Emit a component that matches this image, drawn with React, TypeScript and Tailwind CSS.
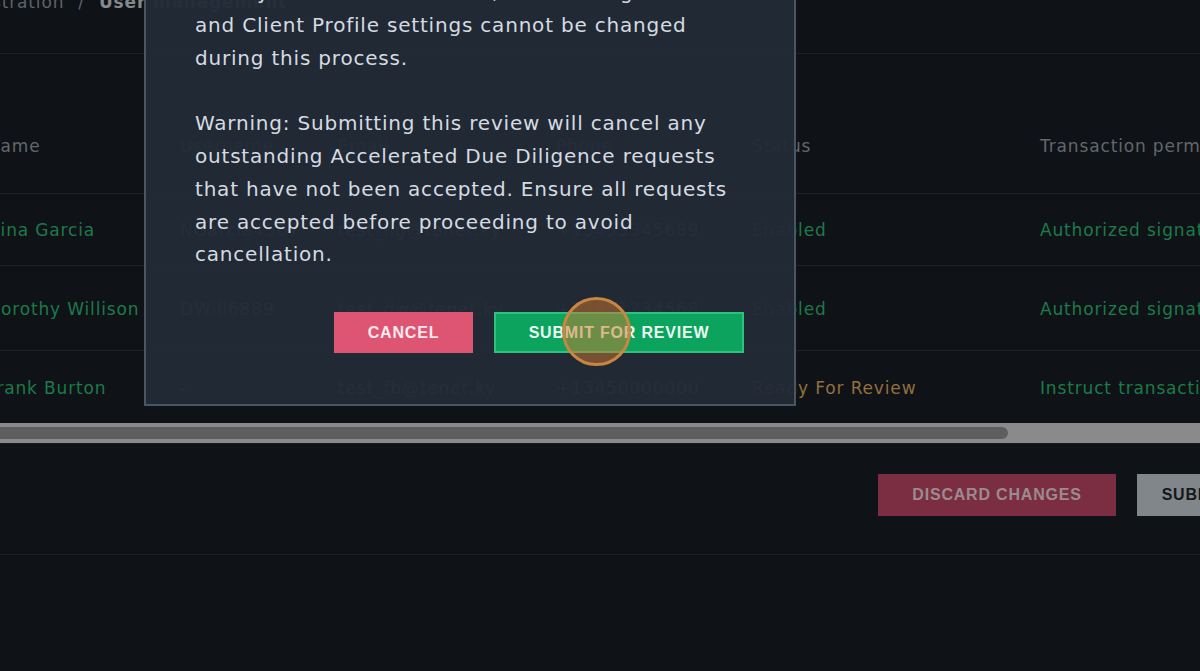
import React from "react";

type Row = {
  name: string;
  username: string;
  email: string;
  phone: string;
  status: string;
  pending?: boolean;
  permission: string;
  height: string;
};

const rows: Row[] = [
  {
    name: "Nina Garcia",
    username: "NGarcia4567",
    email: "test_ng@tenet.ky",
    phone: "+13453345689",
    status: "Enabled",
    permission: "Authorized signatory",
    height: "h-[72px]",
  },
  {
    name: "Dorothy Willison",
    username: "DWill6889",
    email: "test_dw@tenet.ky",
    phone: "+13451234568",
    status: "Enabled",
    permission: "Authorized signatory",
    height: "h-[85px]",
  },
  {
    name: "Frank Burton",
    username: "-",
    email: "test_fb@tenet.ky",
    phone: "+13450000000",
    status: "Ready For Review",
    pending: true,
    permission: "Instruct transactions",
    height: "h-[72px]",
  },
];

const cols = "grid grid-cols-[193px_158px_218px_196px_288px_300px]";

export default function App() {
  return (
    <div className="relative h-[671px] w-[1200px] overflow-hidden bg-[#0f1216] font-['DejaVu_Sans',sans-serif]">
      {/* breadcrumb */}
      <div className="-mt-[10px] flex h-[64px] items-start gap-[14px] border-b border-[#1d2227] text-[17px] tracking-[0.05em]">
        <span className="-ml-[72px] text-[#5f6368]">Administration</span>
        <span className="text-[#5f6368]">/</span>
        <span className="font-bold text-[#84898e]">User management</span>
      </div>

      {/* table */}
      <div className="-ml-[13px] pt-[44px] text-[17px] tracking-[0.05em]">
        <div className={`${cols} h-[96px] items-center border-b border-[#1d2227] pt-[2px] text-[#62676c]`}>
          <span>Name</span>
          <span>Username</span>
          <span>Email</span>
          <span>Phone</span>
          <span>Status</span>
          <span className="whitespace-nowrap">Transaction permission</span>
        </div>
        {rows.map((r, i) => (
          <div
            key={r.name}
            className={`${cols} ${r.height} items-center pt-[3px] ${i < rows.length - 1 ? "border-b border-[#1d2227]" : ""}`}
          >
            <span className="whitespace-nowrap text-[#1d7a4a]">{r.name}</span>
            <span className="text-[#6f757b]">{r.username}</span>
            <span className="text-[#6f757b]">{r.email}</span>
            <span className="text-[#6f757b]">{r.phone}</span>
            <span className={r.pending ? "text-[#93703c]" : "text-[#1d7a4a]"}>{r.status}</span>
            <span className="whitespace-nowrap text-[#1d7a4a]">{r.permission}</span>
          </div>
        ))}
      </div>

      {/* horizontal scrollbar */}
      <div className="h-[21px] border-b border-[#16191c] bg-[#8a8a8a] pt-[4px]">
        <div className="h-[12px] w-[1008px] rounded-r-full bg-[#5e5e5e]" />
      </div>

      {/* footer actions */}
      <div className="flex gap-[21px] border-b border-[#1c2126] pb-[38px] pl-[878px] pt-[30px] font-['Liberation_Sans',sans-serif] text-[16px] font-bold tracking-[0.05em]">
        <button className="h-[42px] w-[238px] shrink-0 bg-[#7b2d41] text-[#9b8b90]">DISCARD CHANGES</button>
        <button className="h-[42px] w-[230px] shrink-0 bg-[#80868a] text-[#15181b]">SUBMIT FOR REVIEW</button>
      </div>

      {/* modal */}
      <div className="absolute -top-[60px] left-[144px] z-10 w-[652px] border-2 border-[#4a5564] bg-[rgba(34,43,55,0.96)] pb-[51px] pl-[49px] pr-[50px] pt-[34px]">
        <div className="text-[20px] leading-[32.8px] tracking-[0.04em] text-[#d5dbe1]">
          <p>
            <span className="block whitespace-nowrap">Once you submit for review, User Management</span>
            <span className="block whitespace-nowrap">and Client Profile settings cannot be changed</span>
            <span className="block whitespace-nowrap">during this process.</span>
          </p>
          <p className="mt-[32.8px]">
            <span className="block whitespace-nowrap">Warning: Submitting this review will cancel any</span>
            <span className="block whitespace-nowrap">outstanding Accelerated Due Diligence requests</span>
            <span className="block whitespace-nowrap">that have not been accepted. Ensure all requests</span>
            <span className="block whitespace-nowrap">are accepted before proceeding to avoid</span>
            <span className="block whitespace-nowrap">cancellation.</span>
          </p>
        </div>
        <div className="mt-[41px] flex justify-end gap-[21px] font-['Liberation_Sans',sans-serif] text-[16px] font-bold tracking-[0.05em]">
          <button className="h-[41px] w-[139px] bg-[#dd5572] text-[#fbe9ee]">CANCEL</button>
          <button className="h-[41px] w-[250px] border-2 border-[#2fc27c] bg-[#0ba35d] text-[#eafaf1]">SUBMIT FOR REVIEW</button>
        </div>
      </div>

      {/* click indicator */}
      <div className="pointer-events-none absolute left-[562px] top-[297px] z-20 h-[69px] w-[69px] rounded-full border-[3px] border-[#c88640] bg-[rgba(205,120,45,0.5)]" />
    </div>
  );
}
